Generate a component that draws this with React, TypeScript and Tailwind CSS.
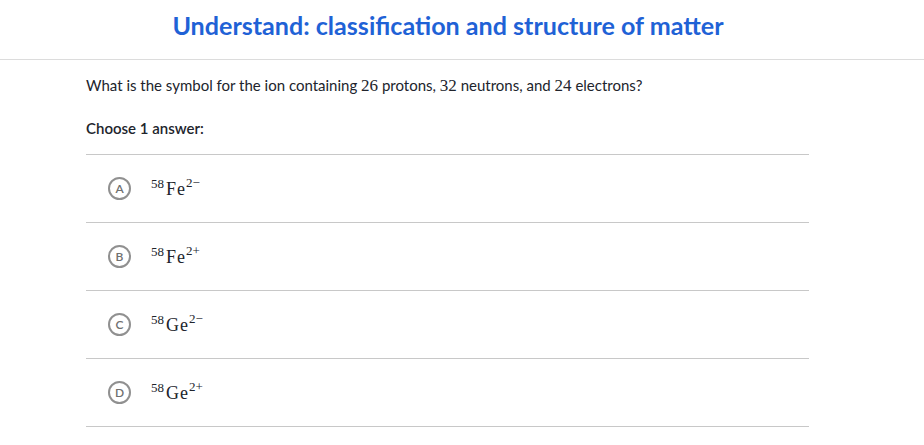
import React from "react";

const serif = { fontFamily: '"Liberation Serif", "DejaVu Serif", serif' };

function Formula({ mass, el, charge }: { mass: string; el: string; charge: string }) {
  return (
    <span className="text-[18px] text-[#21242c] leading-[24px] whitespace-nowrap" style={serif}>
      <span className="text-[13px] align-[7px] mr-[2px]">{mass}</span>
      <span className="tracking-[1px]">{el}</span>
      <span className="text-[13px] align-[8px]">{charge}</span>
    </span>
  );
}

const options = [
  { l: "A", el: "Fe", c: "2−" },
  { l: "B", el: "Fe", c: "2+" },
  { l: "C", el: "Ge", c: "2−" },
  { l: "D", el: "Ge", c: "2+" },
];

export default function App() {
  return (
    <div className="w-[924px] h-[445px] bg-white overflow-hidden" style={{ fontFamily: 'Lato, "Open Sans", sans-serif' }}>
      <div className="h-[60px] border-b border-[#dcdcdc] flex items-center justify-center pr-[28px]">
        <h1 className="text-[25.1px] font-bold text-[#1f62d6] mb-[8px] whitespace-nowrap">
          Understand: classification and structure of matter
        </h1>
      </div>
      <div className="pl-[86px] w-[809px]">
        <p className="pt-[15px] text-[15px] leading-[20px] text-[#21242c] whitespace-nowrap">
          What is the symbol for the ion containing <span className="text-[17px]" style={serif}>26</span> protons,{" "}
          <span className="text-[17px]" style={serif}>32</span> neutrons, and{" "}
          <span className="text-[17px]" style={serif}>24</span> electrons?
        </p>
        <p className="mt-[22px] text-[15px] leading-[20px] font-semibold text-[#21242c]">Choose 1 answer:</p>
        <div className="mt-[16px] border-t border-[#c8c8c8]">
          {options.map((o) => (
            <div key={o.l} className="h-[68px] border-b border-[#c8c8c8] flex items-center pl-[22px]">
              <div className="w-[23px] h-[23px] rounded-full border-2 border-[#909090] flex items-center justify-center text-[12px] font-semibold text-[#6f6f6f] shrink-0">
                {o.l}
              </div>
              <div className="ml-[20px] mb-[6px]">
                <Formula mass="58" el={o.el} charge={o.c} />
              </div>
            </div>
          ))}
        </div>
      </div>
    </div>
  );
}
